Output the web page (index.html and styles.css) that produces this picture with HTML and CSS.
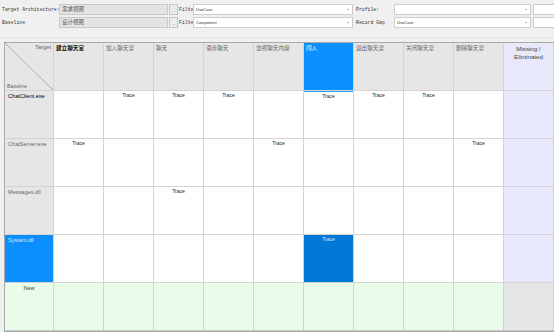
FILE: index.html
```html
<!DOCTYPE html>
<html lang="en">
<head>
	<meta charset="UTF-8">
	<title>Traceability Matrix</title>
	<link rel="stylesheet" href="styles.css">
</head>
<body>
	<div class="toolbar">
		<div class="bar-row">
			<span class="lbl lbl-main">Target Architecture:</span>
			<span class="field ro">需求视图</span>
			<span class="dots">...</span>
			<span class="lbl lbl-filter">Filte</span>
			<span class="select sel-filter">UseCase<i class="caret"></i></span>
			<span class="lbl lbl-side">Profile:</span>
			<span class="select sel-side"><i class="caret"></i></span>
			<span class="field tail"></span>
		</div>
		<div class="bar-row">
			<span class="lbl lbl-main">Baseline</span>
			<span class="field ro">设计视图</span>
			<span class="dots">...</span>
			<span class="lbl lbl-filter">Filte</span>
			<span class="select sel-filter">Component<i class="caret"></i></span>
			<span class="lbl lbl-side">Record Gap</span>
			<span class="select sel-side">UseCase<i class="caret"></i></span>
			<span class="field tail"></span>
		</div>
	</div>

	<div class="frame">
		<div class="matrix">
			<!-- header row -->
			<div class="corner"><span class="c-target">Target</span><span class="c-base">Baseline</span></div>
			<div class="colhead dark">建立聊天室</div>
			<div class="colhead">加入聊天室</div>
			<div class="colhead">聊天</div>
			<div class="colhead">语音聊天</div>
			<div class="colhead">监视聊天内容</div>
			<div class="colhead picked">闯入</div>
			<div class="colhead">退出聊天室</div>
			<div class="colhead">关闭聊天室</div>
			<div class="colhead">删除聊天室</div>
			<div class="colhead missing-head">Missing /<br>Eliminated</div>

			<!-- ChatClient.exe -->
			<div class="rowhead dark">ChatClient.exe</div>
			<div class="cell"></div>
			<div class="cell">Trace</div>
			<div class="cell">Trace</div>
			<div class="cell">Trace</div>
			<div class="cell"></div>
			<div class="cell below-pick">Trace</div>
			<div class="cell">Trace</div>
			<div class="cell">Trace</div>
			<div class="cell"></div>
			<div class="cell missing"></div>

			<!-- ChatServer.exe -->
			<div class="rowhead">ChatServer.exe</div>
			<div class="cell">Trace</div>
			<div class="cell"></div>
			<div class="cell"></div>
			<div class="cell"></div>
			<div class="cell">Trace</div>
			<div class="cell"></div>
			<div class="cell"></div>
			<div class="cell"></div>
			<div class="cell">Trace</div>
			<div class="cell missing"></div>

			<!-- Messages.dll -->
			<div class="rowhead">Messages.dll</div>
			<div class="cell"></div>
			<div class="cell"></div>
			<div class="cell">Trace</div>
			<div class="cell"></div>
			<div class="cell"></div>
			<div class="cell"></div>
			<div class="cell"></div>
			<div class="cell"></div>
			<div class="cell"></div>
			<div class="cell missing"></div>

			<!-- System.dll -->
			<div class="rowhead picked">System.dll</div>
			<div class="cell"></div>
			<div class="cell"></div>
			<div class="cell"></div>
			<div class="cell"></div>
			<div class="cell"></div>
			<div class="cell hit">Trace</div>
			<div class="cell"></div>
			<div class="cell"></div>
			<div class="cell"></div>
			<div class="cell missing"></div>

			<!-- New -->
			<div class="rowhead newhead">New</div>
			<div class="cell fresh"></div>
			<div class="cell fresh"></div>
			<div class="cell fresh"></div>
			<div class="cell fresh"></div>
			<div class="cell fresh"></div>
			<div class="cell fresh"></div>
			<div class="cell fresh"></div>
			<div class="cell fresh"></div>
			<div class="cell fresh"></div>
			<div class="cell blank"></div>
		</div>
	</div>
</body>
</html>
```

FILE: styles.css
```css
*{margin:0;padding:0;box-sizing:border-box;}
html,body{width:554px;height:332px;overflow:hidden;}
body{background:#f0f0f0;font-family:"Liberation Sans","Noto Sans CJK SC",sans-serif;color:#222;}

/* top selector bar */
.toolbar{height:38px;padding-top:4px;border-bottom:1px solid #e2e2e2;display:flex;flex-direction:column;gap:2px;}
.bar-row{display:flex;align-items:center;height:11px;white-space:nowrap;overflow:hidden;}
.bar-row > span{flex-shrink:0;height:11px;}
.lbl{font-family:"Liberation Mono","Noto Sans CJK SC",monospace;font-size:4.8px;line-height:11px;color:#333;}
.lbl-main{width:59px;padding-left:2px;}
.lbl-filter{width:14px;margin-left:1px;}
.lbl-side{width:38px;margin-left:3px;}
.field{border:1px solid #c9c9c9;background:#fff;font-size:5.5px;line-height:9px;padding-left:2px;color:#555;}
.field.ro{width:109px;background:#e4e4e4;font-family:"Noto Sans CJK SC",sans-serif;}
.field.tail{width:25px;margin-left:2px;}
.dots{width:9px;margin-left:1px;border:1px solid #c6c6c6;background:#ececec;font-size:4px;line-height:11px;text-align:center;color:#666;}
.select{position:relative;border:1px solid #cdcdcd;background:#fff;font-size:4px;line-height:9px;padding-left:2px;color:#333;}
.sel-filter{width:160px;}
.sel-side{width:137px;}
.caret{position:absolute;right:3px;top:4px;border-left:1px solid transparent;border-right:1px solid transparent;border-top:1px solid #777;}

/* matrix */
.frame{margin:4px 0 0 4px;border:1px solid #a9a9a9;border-right:none;width:550px;}
.matrix{display:grid;grid-template-columns:48px repeat(10,49px);grid-auto-rows:47px;gap:1px;background:#d3d3d3;border-bottom:1px solid #c8c8c8;}
.matrix > div{background:#fff;overflow:hidden;}

.corner{background:#e6e6e6 !important;display:flex;flex-direction:column;justify-content:space-between;padding:1px 2px 1px 2px;
	background-image:linear-gradient(to top right,transparent calc(50% - 0.6px),#a8a8a8 50%,transparent calc(50% + 0.6px)) !important;}
.c-target{align-self:flex-end;font-size:5.8px;color:#666;}
.c-base{font-size:5.3px;color:#666;}

.colhead{background:#e6e6e6 !important;font-size:5.6px;line-height:8px;padding:1px 2px;color:#666;}
.colhead.dark{color:#111;font-weight:bold;}
.colhead.picked{background:#0b90ff !important;color:#fff;}
.missing-head{background:#e8e8fb !important;text-align:center;font-size:6.2px;line-height:8px;padding-top:2px;color:#444;}

.rowhead{background:#e6e6e6 !important;font-size:5.6px;line-height:8px;padding:1px 3px;color:#666;}
.rowhead.dark{color:#000;}
.rowhead.picked{background:#0b8fff !important;color:#d6ecff;}
.rowhead.newhead{background:#e9fce9 !important;text-align:center;color:#444;}

.cell{font-size:5px;line-height:8px;text-align:center;color:#222;}
.cell.missing{background:#e8e8fc !important;}
.cell.fresh{background:#e9fce9 !important;}
.cell.blank{background:#e6e6e6 !important;}
.cell.hit{background:#0078d7 !important;color:#d8ecff;}
.cell.below-pick{border-top:1px solid #2d9bff;}
```
